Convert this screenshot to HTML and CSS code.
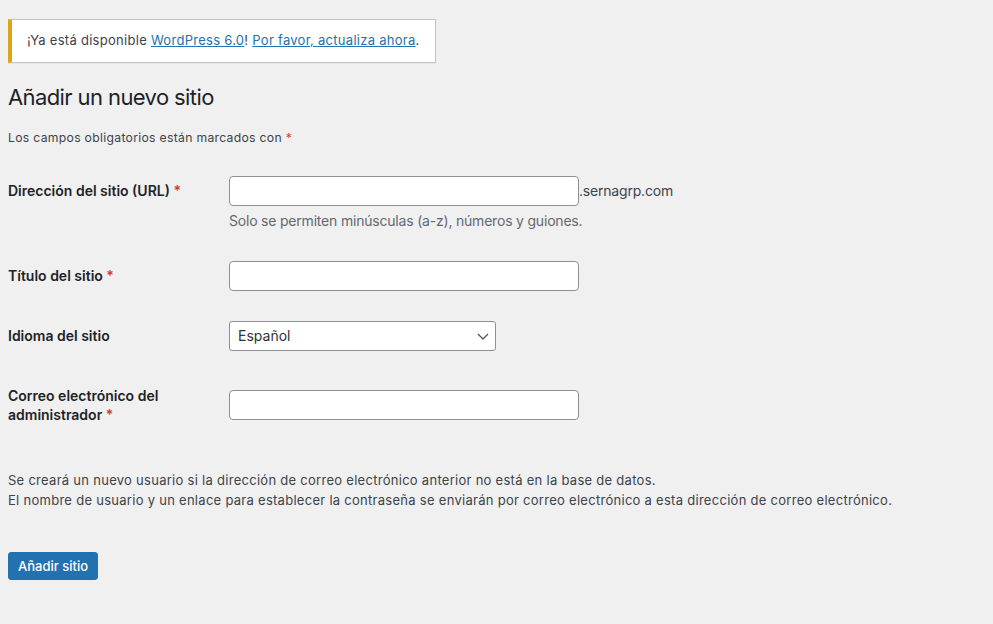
FILE: index.html
```html
<!DOCTYPE html>
<html lang="es">
<head>
    <meta charset="UTF-8">
    <title>Añadir un nuevo sitio</title>
    <link rel="stylesheet" href="styles.css">
</head>
<body>
    <div class="wrap">
        <div class="update-nag">
            ¡Ya está disponible <a href="#">WordPress 6.0</a>! <a href="#">Por favor, actualiza ahora</a>.
        </div>

        <h1>Añadir un nuevo sitio</h1>
        <p class="required-note">Los campos obligatorios están marcados con <span class="required">*</span></p>

        <form id="add-site">
            <table class="form-table">
                <tr>
                    <th><label for="site-address">Dirección del sitio (URL) <span class="required">*</span></label></th>
                    <td>
                        <input type="text" id="site-address" class="regular-text"><span class="suffix">.sernagrp.com</span>
                        <p class="description">Solo se permiten minúsculas (a-z), números y guiones.</p>
                    </td>
                </tr>
                <tr>
                    <th><label for="site-title">Título del sitio <span class="required">*</span></label></th>
                    <td><input type="text" id="site-title" class="regular-text"></td>
                </tr>
                <tr>
                    <th><label for="site-language">Idioma del sitio</label></th>
                    <td>
                        <span class="select-wrap">
                            <select id="site-language">
                                <option>Español</option>
                                <option>English (United States)</option>
                            </select>
                            <svg class="chevron" width="16" height="16" viewBox="0 0 16 16">
                                <path d="M3 6l5 5 5-5" fill="none" stroke="#50575e" stroke-width="1.3"/>
                            </svg>
                        </span>
                    </td>
                </tr>
                <tr>
                    <th><label for="admin-email">Correo electrónico del administrador <span class="required">*</span></label></th>
                    <td><input type="email" id="admin-email" class="regular-text"></td>
                </tr>
            </table>

            <p class="note">Se creará un nuevo usuario si la dirección de correo electrónico anterior no está en la base de datos.<br>
            El nombre de usuario y un enlace para establecer la contraseña se enviarán por correo electrónico a esta dirección de correo electrónico.</p>

            <p class="submit">
                <button type="submit" class="button-primary">Añadir sitio</button>
            </p>
        </form>
    </div>
</body>
</html>
```

FILE: styles.css
```css
body {
    font-family: Inter, "Noto Sans", sans-serif;
    font-size: 13px;
    line-height: 1.4;
    color: #3c434a;
    background-color: #f0f0f1;
    margin: 0;
}

.wrap {
    padding: 19px 8px 0 8px;
}

.update-nag {
    width: fit-content;
    background-color: #fff;
    border: 1px solid #c3c4c7;
    border-left: 4px solid #dba617;
    box-shadow: 0 1px 1px rgba(0, 0, 0, 0.04);
    padding: 11px 15px;
    font-size: 13px;
    line-height: 1.5;
    letter-spacing: 0.28px;
}

.update-nag a {
    color: #2271b1;
}

h1 {
    font-size: 22px;
    font-weight: 400;
    letter-spacing: -0.6px;
    line-height: 30px;
    color: #1d2327;
    margin: 10px 0 0 0;
    padding: 9px 0 4px 0;
}

.required-note {
    margin: 13px 0 14px 0;
    font-size: 12.2px;
    letter-spacing: 0.3px;
    line-height: 18px;
}

.required {
    color: #d63638;
}

.form-table {
    border-collapse: collapse;
    width: 100%;
    margin: 0;
}

.form-table th {
    width: 200px;
    text-align: left;
    vertical-align: top;
    padding: 20px 11px 21px 0;
    font-size: 14px;
    font-weight: 600;
    line-height: 19px;
    color: #1d2327;
}

.form-table td {
    vertical-align: middle;
    padding: 15px 10px;
    font-size: 14px;
    line-height: 1.3;
}

.regular-text {
    width: 350px;
    height: 30px;
    box-sizing: border-box;
    padding: 0 8px;
    font-family: inherit;
    font-size: 14px;
    color: #2c3338;
    background-color: #fff;
    border: 1px solid #8c8f94;
    border-radius: 4px;
    vertical-align: middle;
    outline: none;
}

.suffix {
    vertical-align: middle;
    letter-spacing: -0.2px;
    color: #3c434a;
}

.description {
    margin: 5px 0 0 0;
    line-height: 20px;
    letter-spacing: -0.2px;
    color: #646970;
}

.select-wrap {
    position: relative;
    display: inline-block;
}

.select-wrap select {
    appearance: none;
    -webkit-appearance: none;
    width: 267px;
    height: 30px;
    padding: 0 24px 0 8px;
    font-family: inherit;
    font-size: 14px;
    color: #2c3338;
    background-color: #fff;
    border: 1px solid #8c8f94;
    border-radius: 3px;
    outline: none;
}

.select-wrap .chevron {
    position: absolute;
    right: 5px;
    top: 7px;
    pointer-events: none;
}

.note {
    margin: 25px 0 0 0;
    line-height: 20px;
    letter-spacing: 0.28px;
}

.submit {
    margin: 32px 0 0 0;
    padding: 10px 0;
}

.button-primary {
    background-color: #2271b1;
    color: #fff;
    font-family: inherit;
    font-size: 13px;
    font-weight: 500;
    line-height: 26px;
    height: 28px;
    padding: 0 9px;
    border: 1px solid #2271b1;
    border-radius: 3px;
    cursor: pointer;
}

.button-primary:hover {
    background-color: #135e96;
}
```
